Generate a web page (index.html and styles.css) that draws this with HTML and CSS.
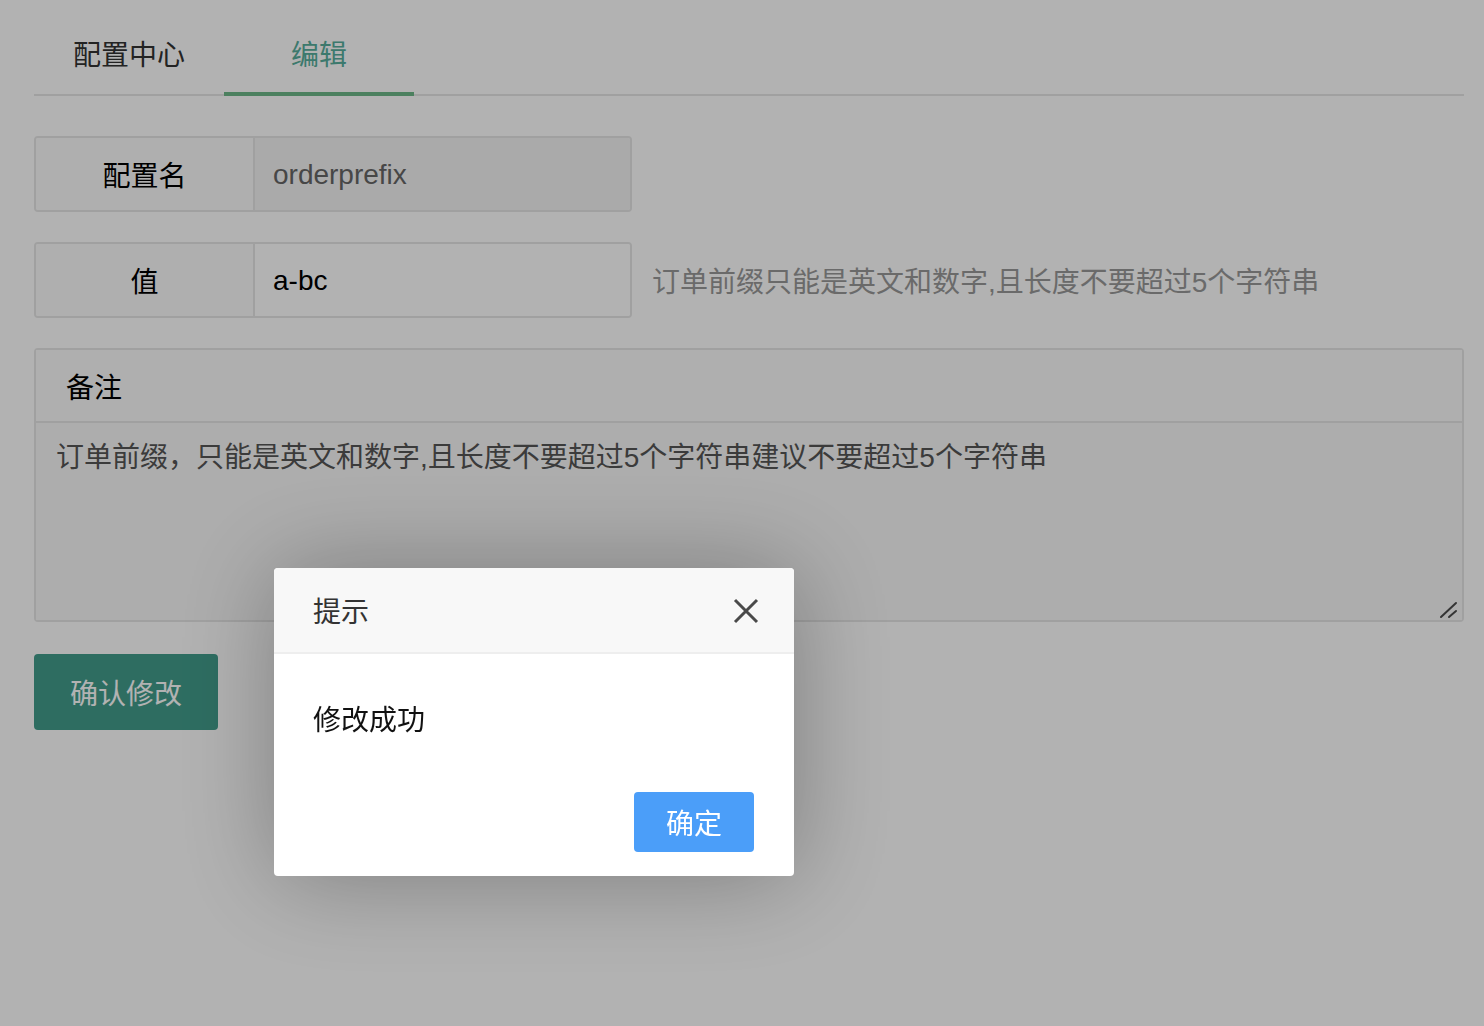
FILE: index.html
```html
<!DOCTYPE html>
<html lang="zh-CN">
<head>
<meta charset="utf-8">
<title>编辑</title>
<link rel="stylesheet" href="styles.css">
</head>
<body>
<div class="page">
  <div class="tabs">
    <div class="tab">配置中心</div>
    <div class="tab tab-active">编辑</div>
  </div>
  <form class="form">
    <div class="row">
      <div class="group">
        <div class="label">配置名</div>
        <div class="field field-readonly">orderprefix</div>
      </div>
    </div>
    <div class="row">
      <div class="group">
        <div class="label">值</div>
        <div class="field field-value">a-bc</div>
      </div>
      <div class="hint">订单前缀只能是英文和数字,且长度不要超过5个字符串</div>
    </div>
    <div class="pane">
      <div class="pane-label">备注</div>
      <textarea class="pane-text">订单前缀，只能是英文和数字,且长度不要超过5个字符串建议不要超过5个字符串</textarea>
      <svg class="grip" width="20" height="18" viewBox="0 0 20 18"><path d="M2 16 L17 2 M10 16 L17 10" stroke="#4d4d4d" stroke-width="2" fill="none" stroke-linecap="round"/></svg>
    </div>
    <div class="actions">
      <button type="button" class="btn-submit">确认修改</button>
    </div>
  </form>
</div>

<div class="shade"></div>
<div class="layer">
  <div class="layer-title">
    <span>提示</span>
    <svg class="layer-close" width="26" height="26" viewBox="0 0 26 26"><path d="M2 2 L24 24 M24 2 L2 24" stroke="#4a4a4a" stroke-width="3" fill="none"/></svg>
  </div>
  <div class="layer-content">修改成功</div>
  <div class="layer-btns">
    <button type="button" class="layer-btn">确定</button>
  </div>
</div>
</body>
</html>
```

FILE: styles.css
```css
* { box-sizing: border-box; }
html, body { margin: 0; padding: 0; background: #fff; }
body {
  font-family: "Liberation Sans", "Noto Sans CJK SC", sans-serif;
  font-size: 28px;
  color: #333;
}
.page { padding: 13px 20px 0 34px; }

.tabs {
  display: flex;
  height: 83px;
  border-bottom: 2px solid #e6e6e6;
}
.tab {
  position: relative;
  width: 190px;
  height: 81px;
  line-height: 80px;
  text-align: center;
  color: #333;
  font-family: "Noto Sans CJK SC", sans-serif;
}
.tab-active { color: #56ae9c; }
.tab-active::after {
  content: "";
  position: absolute;
  left: 0; right: 0;
  bottom: -2px;
  height: 4px;
  background: #6db888;
}

.form { margin-top: 40px; display: flex; flex-direction: column; gap: 30px; }
.row { display: flex; align-items: center; }
.group {
  display: flex;
  width: 598px;
  height: 76px;
  border: 2px solid #e6e6e6;
  border-radius: 4px;
  overflow: hidden;
}
.label {
  width: 219px;
  flex: none;
  border-right: 2px solid #e6e6e6;
  background: #fbfbfb;
  display: flex; align-items: center; justify-content: center;
  color: #000;
  font-family: "Noto Sans CJK SC", sans-serif;
}
.field {
  flex: 1;
  display: flex; align-items: center;
  padding-left: 18px;
  padding-top: 1px;
  background: #fff;
}
.field-readonly { background: #f4f4f4; color: #666; }
.field-value { color: #000; }
.hint {
  margin-left: 20px;
  color: #999;
}

.pane {
  position: relative;
  border: 2px solid #e6e6e6;
  border-radius: 4px;
  display: flex;
  flex-direction: column;
}
.pane-label {
  height: 73px;
  padding-left: 30px;
  display: flex; align-items: center;
  background: #fbfbfb;
  border-bottom: 2px solid #e6e6e6;
  color: #000;
  font-family: "Noto Sans CJK SC", sans-serif;
}
.pane-text {
  display: block;
  width: 100%;
  height: 197px;
  border: 0;
  margin: 0;
  padding: 15px 20px 12px;
  background: #f8f8f8;
  font-family: "Liberation Sans", "Noto Sans CJK SC", sans-serif;
  font-size: 28px;
  line-height: 40px;
  color: #555;
  resize: none;
  outline: none;
}
.grip {
  position: absolute;
  right: 3px;
  bottom: 1px;
}
.actions { margin-top: 2px; }
.btn-submit {
  width: 184px;
  height: 76px;
  border: 0;
  border-radius: 4px;
  background: #429d8c;
  color: #fff;
  font-family: "Noto Sans CJK SC", sans-serif;
  font-size: 28px;
  padding: 0;
}

.shade {
  position: fixed;
  inset: 0;
  background: rgba(0, 0, 0, 0.3);
}
.layer {
  position: fixed;
  left: 274px;
  top: 568px;
  width: 520px;
  background: #fff;
  border-radius: 4px;
  box-shadow: 2px 2px 100px rgba(0, 0, 0, 0.3);
  overflow: hidden;
  font-family: "Noto Sans CJK SC", sans-serif;
}
.layer-title {
  height: 86px;
  padding: 0 35px 0 39px;
  background: #f8f8f8;
  border-bottom: 2px solid #eee;
  display: flex; align-items: center; justify-content: space-between;
  color: #333;
}
.layer-close { margin-top: 2px; }
.layer-content {
  padding: 40px 39px;
  line-height: 48px;
  color: #111;
}
.layer-btns {
  display: flex;
  justify-content: flex-end;
  padding: 10px 40px 24px;
}
.layer-btn {
  width: 120px;
  height: 60px;
  border: 0;
  border-radius: 4px;
  background: #4b9ef9;
  color: #fff;
  font-family: "Noto Sans CJK SC", sans-serif;
  font-size: 28px;
  padding: 0;
}
```
